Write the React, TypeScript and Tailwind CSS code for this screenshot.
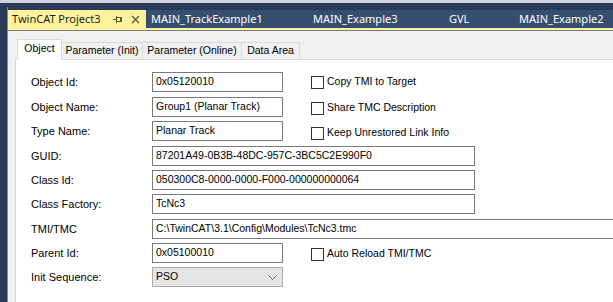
import React from "react";

const docTabs: { label: string; width: string }[] = [
  { label: "MAIN_TrackExample1", width: "w-[162px]" },
  { label: "MAIN_Example3", width: "w-[136px]" },
  { label: "GVL", width: "w-[70px]" },
  { label: "MAIN_Example2", width: "w-[120px]" },
];

const formTabs: { label: string; width: string; active: boolean }[] = [
  { label: "Object", width: "w-[45px]", active: true },
  { label: "Parameter (Init)", width: "w-[81px]", active: false },
  { label: "Parameter (Online)", width: "w-[99px]", active: false },
  { label: "Data Area", width: "w-[58px]", active: false },
];

interface propRow {
  label: string;
  value: string;
  size: "short" | "medium" | "long" | "combo";
  check?: string;
  gap: number;
}

const rows: propRow[] = [
  { label: "Object Id:", value: "0x05120010", size: "short", check: "Copy TMI to Target", gap: 0 },
  { label: "Object Name:", value: "Group1 (Planar Track)", size: "short", check: "Share TMC Description", gap: 5 },
  { label: "Type Name:", value: "Planar Track", size: "short", check: "Keep Unrestored Link Info", gap: 4 },
  { label: "GUID:", value: "87201A49-0B3B-48DC-957C-3BC5C2E990F0", size: "medium", gap: 5 },
  { label: "Class Id:", value: "050300C8-0000-0000-F000-000000000064", size: "medium", gap: 4 },
  { label: "Class Factory:", value: "TcNc3", size: "medium", gap: 4 },
  { label: "TMI/TMC", value: "C:\\TwinCAT\\3.1\\Config\\Modules\\TcNc3.tmc", size: "long", gap: 5 },
  { label: "Parent Id:", value: "0x05100010", size: "short", check: "Auto Reload TMI/TMC", gap: 4 },
  { label: "Init Sequence:", value: "PSO", size: "combo", gap: 4 },
];

const CheckBox = ({ label }: { label: string }) => (
  <div className="ml-[28px] flex items-center gap-[3px] text-[10.5px]">
    <span className="w-[13px] h-[13px] border border-[#333333] bg-white shrink-0" />
    <span className="whitespace-nowrap">{label}</span>
  </div>
);

const Field = ({ row }: { row: propRow }) => {
  if (row.size === "combo") {
    return (
      <div className="w-[131px] h-[20px] border border-[#adadad] bg-[#e5e5e5] flex items-center pl-[3px] pr-[5px] shrink-0 text-[10.5px]">
        <span className="flex-1">{row.value}</span>
        <svg width="9" height="5" viewBox="0 0 9 5" className="mt-[1px]">
          <path d="M0.5 0.5 L4.5 4.5 L8.5 0.5" fill="none" stroke="#6b6b6b" strokeWidth="1" />
        </svg>
      </div>
    );
  }
  const w = row.size === "short" ? "w-[131px]" : row.size === "medium" ? "w-[323px]" : "w-[480px]";
  return (
    <div className={`${w} h-[20px] border border-[#7a7a7a] bg-white flex items-center pl-[3px] shrink-0 whitespace-nowrap overflow-hidden text-[10.5px]`}>
      {row.value}
    </div>
  );
};

const App = () => {
  return (
    <div className="w-[613px] h-[302px] overflow-hidden bg-[#2b3a57] flex flex-col">
      <div className="h-[3px] bg-[#cdd4e2] shrink-0" />
      <div className="flex-1 flex min-h-0">
        <div className="w-[7px] shrink-0" />
        <div className="w-[1px] shrink-0 mt-[4px] bg-[#7d8ba5]" />
        <div className="flex-1 flex flex-col min-w-0">
          <div className="h-[7px] shrink-0" />
          {/* document tabs */}
          <div className="h-[18px] shrink-0 flex items-center bg-[#364e6f] text-[11px] font-['Noto_Sans',sans-serif] text-white whitespace-nowrap">
            <div className="w-[138px] h-full bg-[#fff29d] text-[#1e1e1e] flex items-center pl-[4px] shrink-0">
              <span>TwinCAT Project3</span>
              <svg width="10" height="9" viewBox="0 0 10 9" className="ml-auto">
                <path d="M0 4.5 H3 M3.5 1 V8 M3.5 2.5 H8.5 V6.5 H3.5 M7.5 2.5 V6.5" fill="none" stroke="#55552e" strokeWidth="1" />
              </svg>
              <svg width="9" height="9" viewBox="0 0 9 9" className="ml-[8px] mr-[6px]">
                <path d="M1 1 L8 8 M8 1 L1 8" fill="none" stroke="#5a5a3a" strokeWidth="1.4" />
              </svg>
            </div>
            <div className="flex items-center pl-[5px]">
              {docTabs.map((tab, index) => (
                <span key={`doc-tab-${index}`} className={`${tab.width} shrink-0`}>
                  {tab.label}
                </span>
              ))}
            </div>
          </div>
          <div className="h-[2px] shrink-0 bg-[#fff29d]" />
          <div className="h-[1px] shrink-0 bg-[#7c7c7c]" />

          {/* tool window */}
          <div className="flex-1 bg-[#f0f0f0] pl-[7px] pt-[8px] flex flex-col text-[11px] font-['Liberation_Sans',Arial,sans-serif] text-black">
            <div className="h-[21px] flex items-end shrink-0 text-[10.5px]">
              <div className="w-[2px] h-[1px] bg-[#d9d9d9] shrink-0" />
              {formTabs.map((tab, index) =>
                tab.active ? (
                  <div
                    key={`form-tab-${index}`}
                    className={`${tab.width} h-[21px] bg-white border border-b-0 border-[#d9d9d9] flex items-center justify-center pb-[2px] shrink-0`}
                  >
                    {tab.label}
                  </div>
                ) : (
                  <div
                    key={`form-tab-${index}`}
                    className={`${tab.width} h-[18px] bg-[#f0f0f0] border border-l-0 border-[#d9d9d9] flex items-center justify-center shrink-0 whitespace-nowrap`}
                  >
                    {tab.label}
                  </div>
                )
              )}
              <div className="flex-1 h-[1px] bg-[#d9d9d9]" />
            </div>
            <div className="flex-1 bg-white border-l border-[#d9d9d9] pl-[15px] pt-[12px] flex flex-col">
              {rows.map((row, index) => (
                <div
                  key={`row-${index}`}
                  className={`flex items-center h-[20px] ${row.gap === 5 ? "mt-[5px]" : row.gap === 4 ? "mt-[4px]" : ""}`}
                >
                  <span className="w-[121px] shrink-0 whitespace-nowrap">{row.label}</span>
                  <Field row={row} />
                  {row.check && (
                    <div className={index === 2 ? "mt-[4px]" : index === 0 ? "" : "mt-[2px]"}>
                      <CheckBox label={row.check} />
                    </div>
                  )}
                </div>
              ))}
            </div>
          </div>
        </div>
      </div>
    </div>
  );
};

export default App;
